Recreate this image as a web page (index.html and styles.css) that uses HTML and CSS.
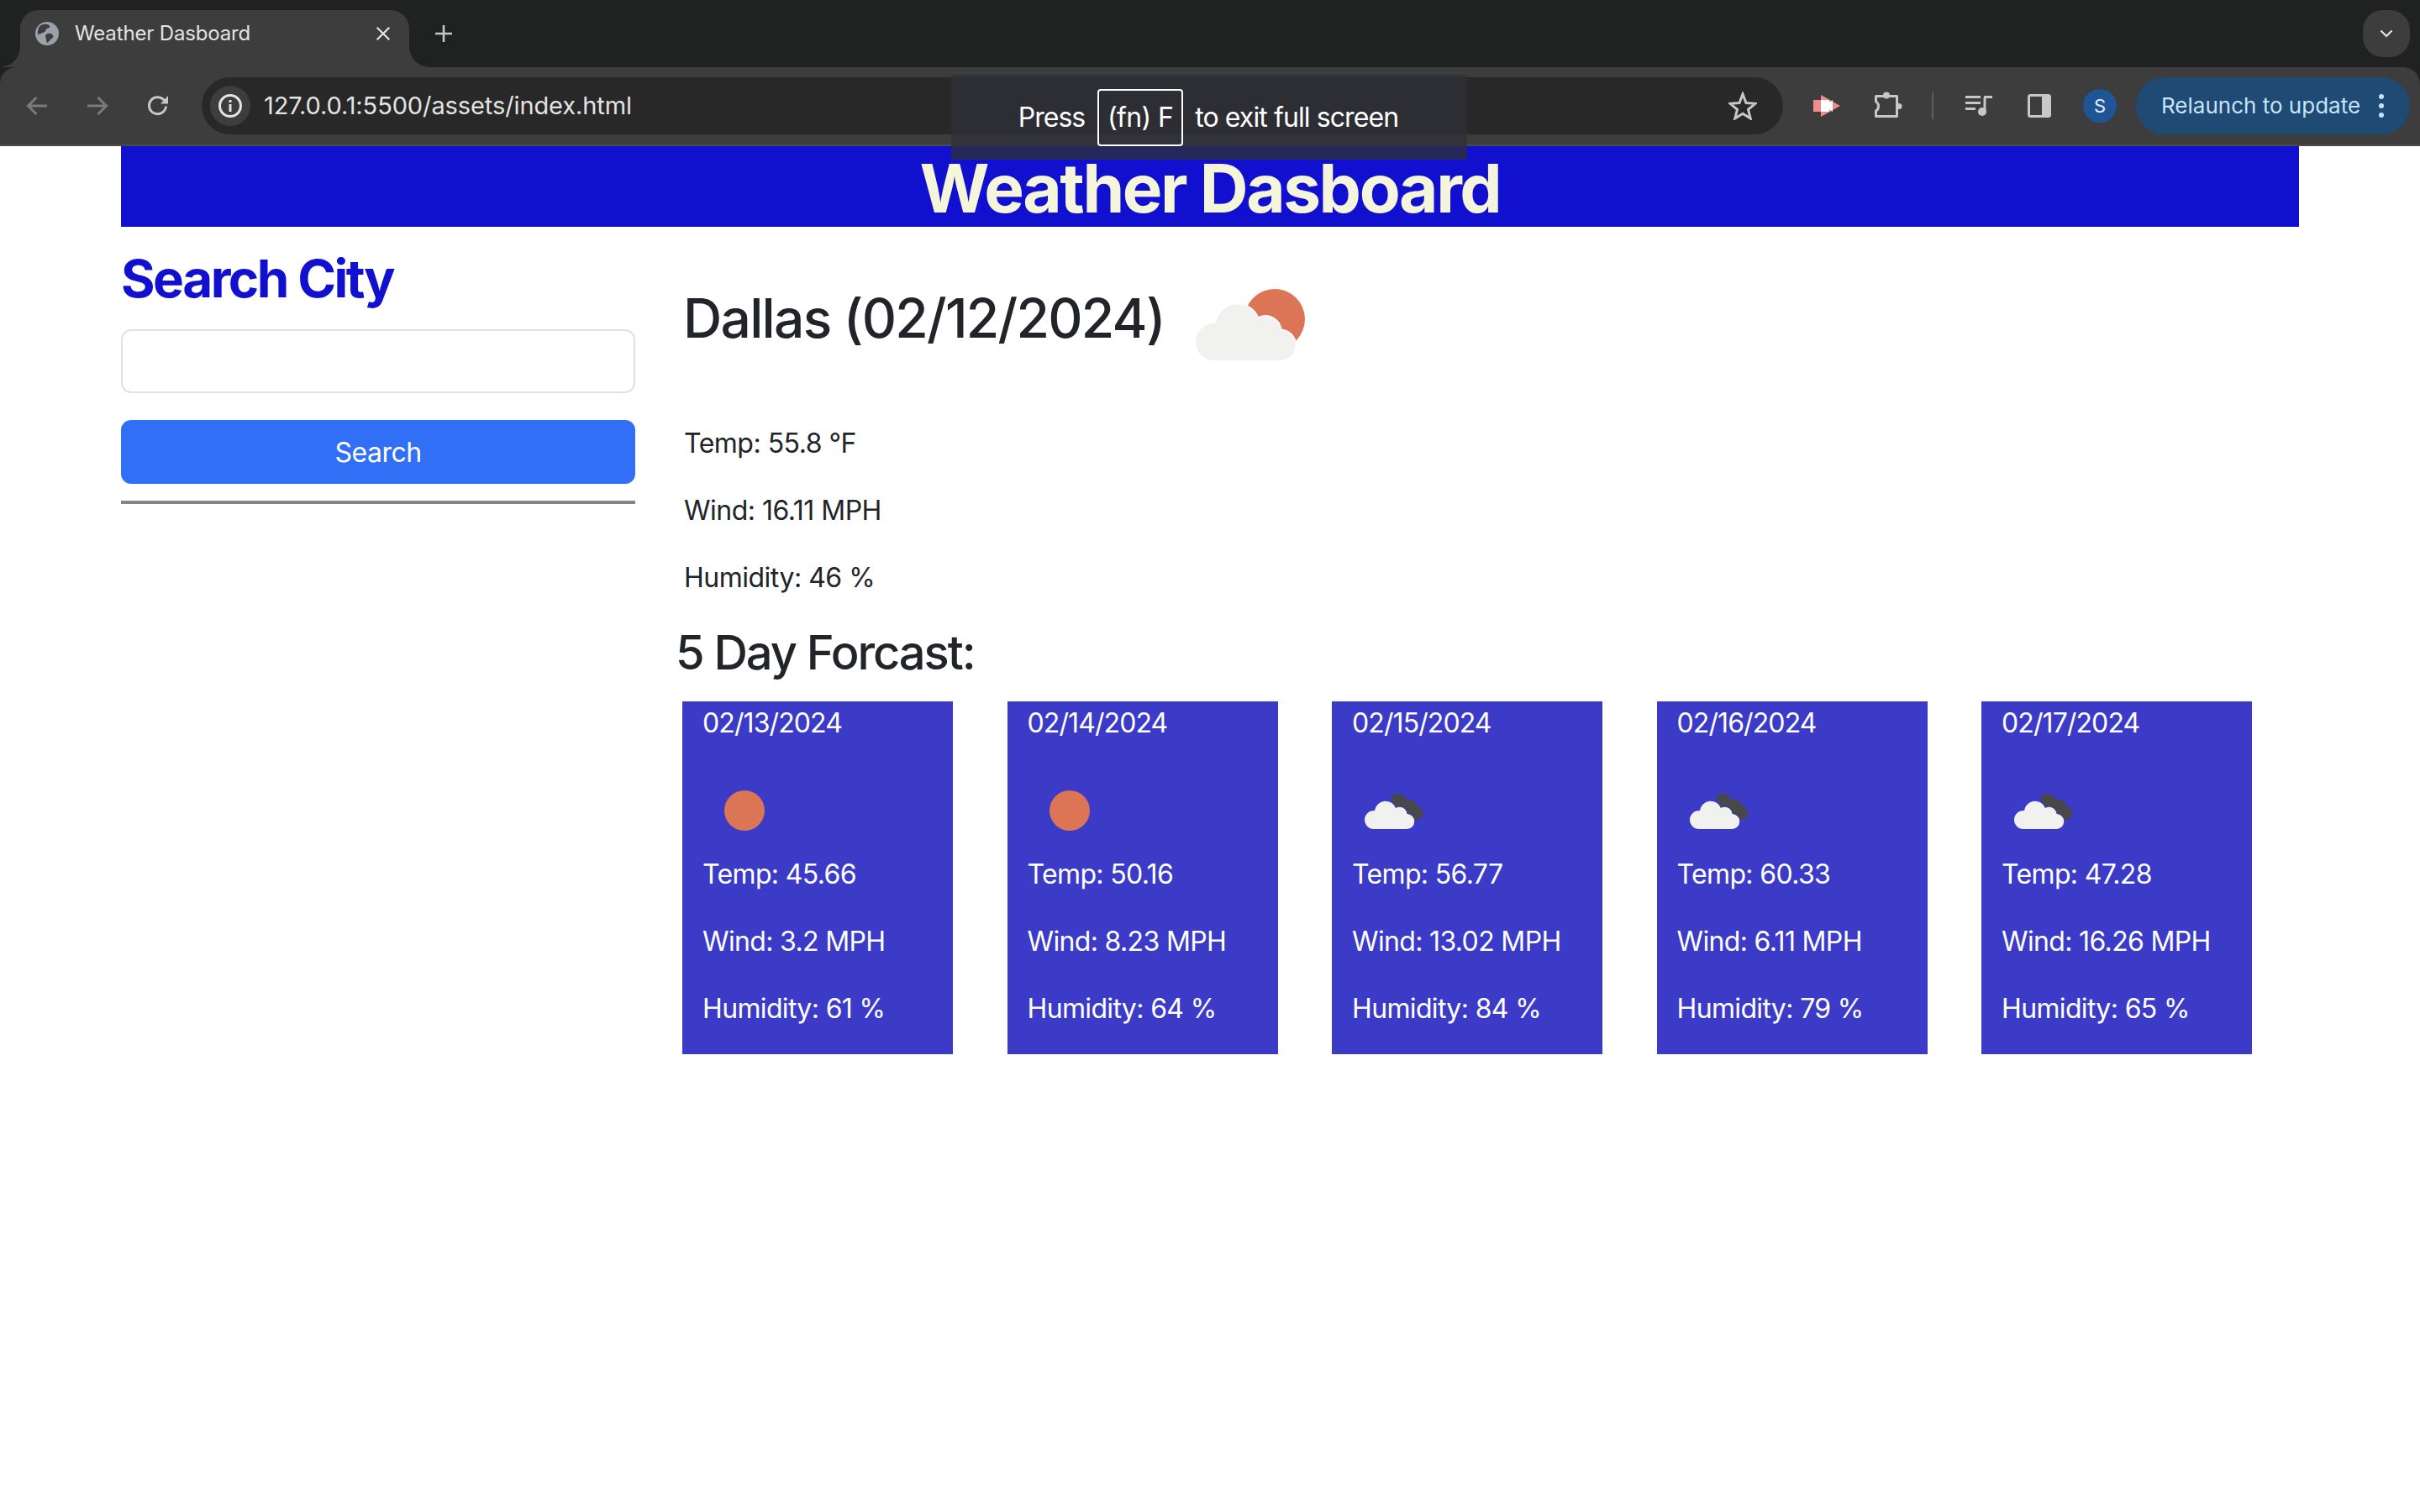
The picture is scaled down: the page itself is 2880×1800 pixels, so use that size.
FILE: index.html
```html
<!DOCTYPE html>
<html lang="en">
<head>
<meta charset="utf-8">
<title>Weather Dasboard</title>
<link rel="stylesheet" href="styles.css">
</head>
<body>
<svg class="defs" width="0" height="0" aria-hidden="true">
  <defs>
    <path id="cloud" d="M26 72A11 11 0 0 1 26 50L27 50A13 13 0 0 1 52 47A9 9 0 0 1 65.5 54A9 9 0 0 1 65 72Z"/>
  </defs>
</svg>

<div class="chrome">
  <div class="tabstrip">
    <div class="tab">
      <svg class="favicon" viewBox="0 0 28 28"><circle cx="14" cy="14" r="14" fill="#9aa1a8"/><path d="M6 4.500C9 2.500 13 2 16 3.500L17.500 6C16 8 13 7.500 12.500 10C12 12.500 8.500 12.500 7 14L3 15C2.500 10.500 3.500 7 6 4.500ZM15 14C18 13 21 14.500 21.500 17C21 20 18 20 17 22.500L14 25C12.500 22.500 13.500 20 12 17.500C12 15.500 13 14.500 15 14Z" fill="#3d3d3d"/></svg>
      <span class="tab-title">Weather Dasboard</span>
      <svg class="tab-close" viewBox="0 0 16 16"><path d="M1.500 1.500L14.500 14.500M14.500 1.500L1.500 14.500" stroke="#e3e3e3" stroke-width="2"/></svg>
    </div>
    <svg class="new-tab" viewBox="0 0 22 22"><path d="M11 1V21M1 11H21" stroke="#c7c7c7" stroke-width="2.600"/></svg>
    <div class="tab-search"><svg viewBox="0 0 16 10"><path d="M1.500 1.500L8 8L14.500 1.500" fill="none" stroke="#e3e3e3" stroke-width="2.200"/></svg></div>
  </div>

  <div class="toolbar">
    <div class="tool"><svg class="ico-arrow" viewBox="0 0 26 24"><path d="M25 12H3M12.500 2L2.500 12L12.500 22" fill="none" stroke="#7b7b7b" stroke-width="3"/></svg></div>
    <div class="tool"><svg class="ico-arrow" viewBox="0 0 26 24"><path d="M1 12H23M13.500 2L23.500 12L13.500 22" fill="none" stroke="#7b7b7b" stroke-width="3"/></svg></div>
    <div class="tool"><svg class="ico-reload" viewBox="0 0 26 26"><path d="M22.500 13.500A10 10 0 1 1 19.500 5.500L24 9.500" fill="none" stroke="#c7c7c7" stroke-width="3"/><path d="M25 1V10.500H16Z" fill="#c7c7c7"/></svg></div>

    <div class="omnibox">
      <div class="info-chip"><svg class="ico-info" viewBox="0 0 28 28"><circle cx="14" cy="14" r="12.500" fill="none" stroke="#e3e3e3" stroke-width="3"/><rect x="12.500" y="12" width="3" height="9" fill="#e3e3e3"/><rect x="12.500" y="7" width="3" height="3" fill="#e3e3e3"/></svg></div>
      <span class="url">127.0.0.1:5500/assets/index.html</span>
      <svg class="ico-star" viewBox="0 0 34 34"><path d="M17 3L21 13.500L32 14.300L23.500 21.300L26.200 32L17 26.200L7.800 32L10.500 21.300L2 14.300L13 13.500Z" fill="none" stroke="#c7c7c7" stroke-width="3"/></svg>
    </div>

    <div class="tool tool-first"><svg class="ico-rec" viewBox="0 0 32 26"><path d="M9 0L32 13L9 26Z" fill="#f28b8b"/><rect x="0" y="6" width="10" height="14" fill="#f28b8b"/><path d="M9 6H19L19 9L23 6V20L19 17L19 20H9Z" fill="#fff"/></svg></div>
    <div class="tool"><svg class="ico-puzzle" viewBox="0 0 38 34"><path d="M5.500 5.500H30.500V29.500H5.500V23C9.500 21 9.500 14 5.500 12Z" fill="none" stroke="#c7c7c7" stroke-width="3" stroke-linejoin="round"/><circle cx="18" cy="4.500" r="4" fill="#c7c7c7"/><circle cx="33" cy="17.500" r="3.500" fill="#c7c7c7"/></svg></div>
    <div class="tool-divider"></div>
    <div class="tool"><svg class="ico-music" viewBox="0 0 32 24"><path d="M0 1.500H18M0 8.500H18M0 15.500H12" stroke="#c7c7c7" stroke-width="3"/><path d="M23 2V19" stroke="#c7c7c7" stroke-width="3"/><path d="M22 1.500H32" stroke="#c7c7c7" stroke-width="3"/><circle cx="20" cy="19" r="5" fill="#c7c7c7"/></svg></div>
    <div class="tool"><svg class="ico-panel" viewBox="0 0 28 28"><rect x="1.500" y="1.500" width="25" height="25" rx="2" fill="none" stroke="#c7c7c7" stroke-width="3"/><rect x="17" y="1.500" width="10" height="25" fill="#c7c7c7"/></svg></div>
    <div class="tool"><span class="avatar">S</span></div>
    <div class="relaunch">
      <span class="relaunch-label">Relaunch to update</span>
      <span class="kebab"><i></i><i></i><i></i></span>
    </div>
  </div>
</div>

<div class="fs-hint">
  <span class="fs-press">Press</span>
  <kbd class="fs-key">(fn) F</kbd>
  <span class="fs-tail">to exit full screen</span>
</div>

<div class="page">
  <header class="banner"><h1>Weather Dasboard</h1></header>
  <div class="layout">
    <aside class="sidebar">
      <h2 class="search-title">Search City</h2>
      <input class="search-input" type="text" aria-label="City">
      <button class="search-btn" type="button">Search</button>
      <hr class="rule">
    </aside>
    <main class="content">
      <div class="today-head">
        <h2>Dallas (02/12/2024)</h2>
        <svg class="today-icon" viewBox="0 0 100 100"><circle cx="62" cy="47.500" r="18" fill="#dc7556"/><use href="#cloud" fill="#f1f2f0" stroke="#fff" stroke-width="1.500" paint-order="stroke"/></svg>
      </div>
      <p class="stat">Temp: 55.8 °F</p>
      <p class="stat">Wind: 16.11 MPH</p>
      <p class="stat">Humidity: 46 %</p>
      <h3 class="forecast-title">5 Day Forcast:</h3>
      <div class="cards">
        <article class="card">
          <p class="card-date">02/13/2024</p>
          <svg class="card-icon" viewBox="0 0 100 100"><circle cx="50" cy="50" r="24" fill="#dc7556"/></svg>
          <p>Temp: 45.66</p><p>Wind: 3.2 MPH</p><p>Humidity: 61 %</p>
        </article>
        <article class="card">
          <p class="card-date">02/14/2024</p>
          <svg class="card-icon" viewBox="0 0 100 100"><circle cx="50" cy="50" r="24" fill="#dc7556"/></svg>
          <p>Temp: 50.16</p><p>Wind: 8.23 MPH</p><p>Humidity: 64 %</p>
        </article>
        <article class="card">
          <p class="card-date">02/15/2024</p>
          <svg class="card-icon" viewBox="0 0 100 100"><path d="M46 34A11 11 0 0 1 65 38A8 8 0 0 1 77 45A8 8 0 0 1 76 61L60 61Z" fill="#48484b"/><use href="#cloud" fill="#f1f2f0" stroke="#3b3bc8" stroke-width="1.500" paint-order="stroke"/></svg>
          <p>Temp: 56.77</p><p>Wind: 13.02 MPH</p><p>Humidity: 84 %</p>
        </article>
        <article class="card">
          <p class="card-date">02/16/2024</p>
          <svg class="card-icon" viewBox="0 0 100 100"><path d="M46 34A11 11 0 0 1 65 38A8 8 0 0 1 77 45A8 8 0 0 1 76 61L60 61Z" fill="#48484b"/><use href="#cloud" fill="#f1f2f0" stroke="#3b3bc8" stroke-width="1.500" paint-order="stroke"/></svg>
          <p>Temp: 60.33</p><p>Wind: 6.11 MPH</p><p>Humidity: 79 %</p>
        </article>
        <article class="card">
          <p class="card-date">02/17/2024</p>
          <svg class="card-icon" viewBox="0 0 100 100"><path d="M46 34A11 11 0 0 1 65 38A8 8 0 0 1 77 45A8 8 0 0 1 76 61L60 61Z" fill="#48484b"/><use href="#cloud" fill="#f1f2f0" stroke="#3b3bc8" stroke-width="1.500" paint-order="stroke"/></svg>
          <p>Temp: 47.28</p><p>Wind: 16.26 MPH</p><p>Humidity: 65 %</p>
        </article>
      </div>
    </main>
  </div>
</div>
</body>
</html>
```

FILE: styles.css
```css
* { box-sizing: border-box; }
html, body { margin: 0; padding: 0; background: #fff; }
body { font-family: Inter, "Liberation Sans", sans-serif; font-size: 32px; line-height: 48px; color: #212529; min-height: 1800px; position: relative; }
.defs { position: absolute; }
svg { display: block; flex: none; }

/* browser chrome */
.chrome { background: #202221; }
.tabstrip { height: 80px; padding: 12px 12px 0 24px; display: flex; align-items: flex-start; }
.tab { position: relative; width: 463px; height: 68px; background: #3d3d3d; border-radius: 22px 22px 0 0; display: flex; align-items: center; padding: 0 0 12px 18px; }
.tab::before, .tab::after { content: ""; position: absolute; bottom: 0; width: 24px; height: 24px; }
.tab::before { left: -24px; background: radial-gradient(circle at 0 0, transparent 23.500px, #3d3d3d 24px); }
.tab::after { right: -24px; background: radial-gradient(circle at 100% 0, transparent 23.500px, #3d3d3d 24px); }
.favicon { width: 28px; height: 28px; }
.tab-title { margin-left: 19px; font-size: 24px; letter-spacing: -.15px; line-height: 32px; color: #e3e3e3; white-space: nowrap; width: 358px; }
.tab-close { width: 18px; height: 18px; }
.new-tab { width: 22px; height: 22px; margin: 17px 0 0 30px; }
.tab-search { margin-left: auto; width: 56px; height: 56px; border-radius: 24px; background: #3d3d3d; display: flex; align-items: center; justify-content: center; }
.tab-search svg { width: 16px; height: 10px; }

.toolbar { height: 94px; background: #3d3d3d; border-bottom: 2px solid #4a4a4a; border-radius: 20px 20px 0 0; padding: 0 12px 0 8px; display: flex; align-items: center; }
.tool { width: 72px; height: 68px; display: flex; align-items: center; justify-content: center; }
.tool-first { margin-left: 16px; }
.ico-arrow { width: 26px; height: 24px; }
.ico-reload { width: 26px; height: 26px; }
.omnibox { flex: 1; min-width: 0; height: 68px; margin-left: 16px; background: #282828; border-radius: 34px; display: flex; align-items: center; padding: 0 31px 0 10px; }
.info-chip { width: 48px; height: 48px; border-radius: 50%; background: #3d3d3d; display: flex; align-items: center; justify-content: center; }
.ico-info { width: 28px; height: 28px; }
.url { margin-left: 16px; font-size: 29px; letter-spacing: -.1px; line-height: 36px; color: #e3e3e3; white-space: nowrap; }
.ico-star { width: 34px; height: 34px; margin-left: auto; }
.ico-rec { width: 32px; height: 26px; }
.ico-puzzle { width: 38px; height: 34px; }
.tool-divider { width: 2px; height: 32px; background: #5f5f5f; margin: 0 18px 0 17px; }
.ico-music { width: 32px; height: 24px; }
.ico-panel { width: 28px; height: 28px; }
.avatar { width: 40px; height: 40px; border-radius: 50%; background: #1f5596; color: #e8f0fe; font-size: 22px; line-height: 40px; text-align: center; }
.relaunch { margin-left: 7px; width: 326px; height: 68px; border-radius: 34px; background: #1f4a73; display: flex; align-items: center; padding-left: 30px; color: #c7e3fb; }
.relaunch-label { font-size: 26px; line-height: 36px; white-space: nowrap; width: 259px; }
.kebab { display: flex; flex-direction: column; gap: 5px; }
.kebab i { display: block; width: 6px; height: 6px; border-radius: 50%; background: #c7e3fb; }

/* full-screen hint, floats over the chrome */
.fs-hint { position: absolute; left: 1132px; top: 89px; width: 614px; height: 101px; padding-right: 2px; background: rgba(47, 48, 54, .77); color: #fff; display: flex; align-items: center; justify-content: center; font-size: 32px; line-height: 40px; }
.fs-press { letter-spacing: -1px; margin-right: 15px; }
.fs-tail { letter-spacing: -.9px; margin-left: 14px; }
.fs-key { width: 102px; height: 68px; border: 2px solid #fff; border-radius: 4px; font-family: inherit; font-size: 32px; letter-spacing: -.6px; line-height: 64px; text-align: center; }

/* page */
.page { padding: 0 144px; }
.banner { background: #1110cf; height: 96px; padding-top: 2px; text-align: center; }
.banner h1 { margin: 0; font-size: 80px; letter-spacing: -2.400px; line-height: 96px; font-weight: 700; color: #f5f5dc; }
.layout { display: flex; align-items: flex-start; }
.sidebar { width: 612px; padding-top: 21px; }
.search-title { margin: 0 0 24px; padding-top: 3px; height: 76.800px; font-size: 62px; letter-spacing: -2.500px; line-height: 76.800px; font-weight: 700; color: #1110cf; }
.search-input { display: block; width: 100%; height: 76px; border: 2px solid #dee2e6; border-radius: 12px; background: #fff; }
.search-btn { display: block; width: 100%; height: 76px; margin-top: 32px; padding: 2px 0 0; border: 0; border-radius: 12px; background: #316ff6; color: #fff; font-family: inherit; font-size: 32px; letter-spacing: -.5px; }
.rule { margin: 20px 0 0; height: 4px; border: 0; background: #858585; }
.content { margin-left: 48px; padding-top: 15px; flex: 1; min-width: 0; }
.today-head { display: flex; align-items: center; margin-left: 9px; gap: 7px; height: 200px; margin-bottom: 17px; }
.today-head h2 { margin: 0 0 12px; font-size: 64px; letter-spacing: -1.700px; line-height: 76.800px; font-weight: 500; }
.today-icon { width: 200px; height: 200px; }
.stat { margin: 0 0 30px 10px; padding-top: 2px; letter-spacing: -.5px; }
.forecast-title { margin: 0 0 24px; padding-top: 2px; font-size: 56px; letter-spacing: -2.050px; line-height: 67.200px; font-weight: 500; }
.cards { display: flex; gap: 64.500px; margin-left: 8px; }
.card { width: 322px; height: 420px; background: #3b3bc8; color: #fff; padding: 0 24px; flex: none; }
.card p { margin: 0 0 30px; padding-top: 2px; white-space: nowrap; letter-spacing: -.65px; }
.card .card-date { letter-spacing: -.9px; }
.card-icon { width: 100px; height: 100px; }
```
